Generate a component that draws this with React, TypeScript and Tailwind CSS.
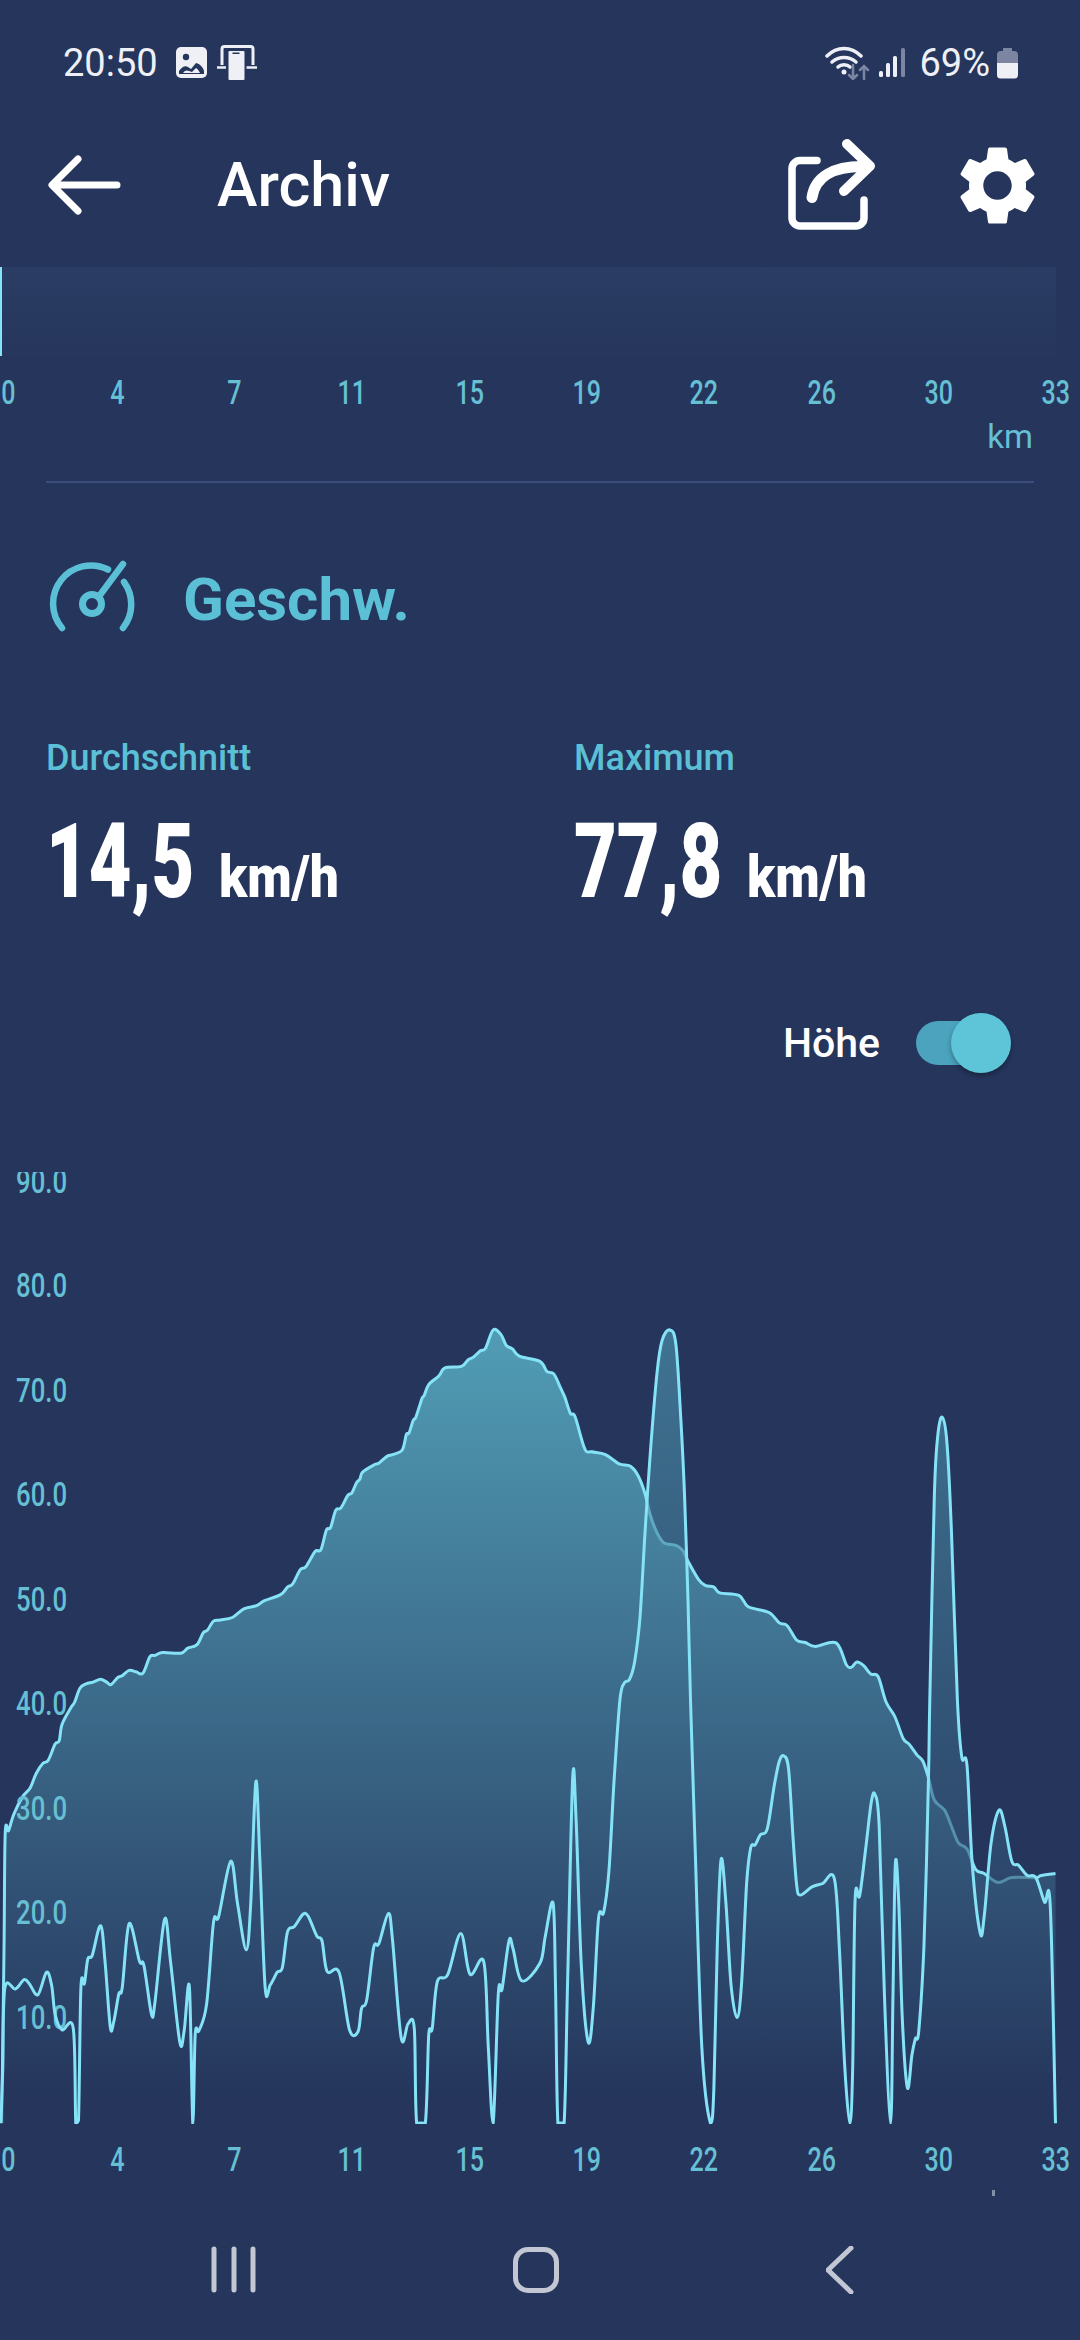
import React from "react";

type Pt = [number, number];

const BASE_Y = 2123;

// traces were read off zoomed crops, so each run has its own origin and y scale
const run = (ox: number, oy: number, sy: number, pts: number[][]): Pt[] =>
  pts.map(([x, y]) => [ox + x / 2.904, oy + y / sy]);

const elevation: Pt[] = [
  [1.7, BASE_Y],
  [4, 1950],
  ...run(0, 1700, 2.45, [
    [15, 328], [25, 320], [40, 280], [65, 238], [88, 215], [105, 180], [125, 155], [140, 148],
    [160, 108], [172, 100], [180, 60], [205, 20], [217, 5],
  ]),
  ...run(0, 1140, 2.8, [
    [232, 1535], [250, 1523], [270, 1518], [292, 1510], [310, 1518], [322, 1525], [342, 1505], [355, 1500],
    [375, 1485], [395, 1489], [415, 1493], [435, 1447], [450, 1443], [472, 1435], [525, 1437], [545, 1423],
    [572, 1413], [590, 1380], [603, 1372], [620, 1347], [640, 1344], [675, 1337], [708, 1313], [745, 1304],
    [768, 1290], [815, 1273], [835, 1252], [850, 1243], [872, 1203], [888, 1195], [915, 1152], [932, 1147],
    [948, 1092], [960, 1085], [975, 1037], [990, 1030], [1010, 995], [1022, 988], [1035, 960], [1045, 950],
    [1053, 930], [1090, 908], [1100, 905], [1125, 885], [1140, 881], [1168, 868], [1180, 825], [1188, 820],
    [1200, 785], [1208, 775], [1225, 725], [1232, 715], [1245, 685], [1275, 660], [1292, 638], [1340, 634],
    [1360, 615], [1375, 608], [1395, 590], [1410, 583], [1432, 532], [1455, 545], [1470, 575], [1488, 585],
    [1508, 605], [1568, 620],
  ]),
  ...run(540, 1140, 2.8, [
    [20, 648], [40, 655], [60, 695], [72, 720], [88, 765], [102, 775], [130, 865], [150, 873], [190, 881],
    [230, 907], [262, 913], [285, 940], [305, 990], [320, 1050], [340, 1100], [360, 1128], [395, 1135],
    [415, 1150], [430, 1180], [460, 1230], [480, 1247], [505, 1252], [522, 1268], [578, 1275], [605, 1307],
    [665, 1323], [695, 1352], [718, 1360], [745, 1400], [770, 1407], [800, 1418], [860, 1408], [890, 1470],
    [905, 1476], [920, 1462], [940, 1472], [960, 1495], [982, 1503],
  ]),
  ...run(540, 1700, 2.45, [
    [1005, 5], [1030, 40], [1055, 95], [1072, 108], [1095, 135], [1112, 150], [1128, 190], [1145, 245],
    [1175, 270], [1195, 310], [1215, 350], [1240, 365], [1265, 415], [1290, 425], [1330, 447], [1370, 435],
    [1440, 435], [1455, 430], [1497, 425],
  ]),
];

const speed: Pt[] = [
  ...run(0, 1700, 2.45, [
    [3, 1037], [8, 900], [14, 706], [45, 708], [70, 685], [85, 695], [110, 722], [135, 667], [150, 700],
    [160, 770], [180, 808], [213, 805], [220, 1037], [228, 1030], [235, 705], [245, 695], [255, 635],
    [268, 625], [292, 553], [305, 640], [320, 800], [330, 790], [345, 720], [355, 705], [375, 548],
    [405, 640], [418, 650], [440, 770], [450, 740], [478, 537], [495, 640], [522, 838], [535, 810],
    [550, 703], [560, 1037], [567, 820], [578, 810], [600, 745], [620, 545], [635, 530], [670, 395],
    [690, 500], [715, 612], [728, 500], [743, 200], [755, 400], [770, 705], [785, 698], [805, 667],
    [820, 655], [835, 568], [855, 555], [880, 525], [895, 530], [920, 578], [935, 590], [950, 665],
    [985, 668], [1015, 808], [1040, 812], [1050, 755], [1065, 735], [1085, 607], [1100, 597], [1128, 523],
    [1140, 590], [1165, 828], [1185, 793], [1203, 805], [1210, 1037], [1235, 1037], [1245, 822], [1255, 805],
    [1270, 690], [1300, 673], [1338, 572], [1365, 672], [1405, 642], [1418, 850], [1432, 1037], [1447, 720],
    [1458, 708], [1478, 590], [1490, 610], [1515, 688], [1568, 645],
  ]),
  ...run(540, 1700, 2.45, [
    [15, 580], [38, 498], [45, 700], [52, 1037], [70, 1037], [80, 700], [95, 190], [105, 300], [120, 650],
    [140, 838], [155, 750], [170, 535], [185, 520], [200, 420], [215, 200],
  ]),
  ...run(540, 1140, 2.8, [
    [232, 1568], [245, 1520], [260, 1510], [275, 1460], [290, 1340], [305, 1100], [320, 880], [340, 650],
    [355, 560], [377, 532], [395, 575], [410, 800], [420, 1000], [430, 1300], [437, 1568],
  ]),
  ...run(540, 1700, 2.45, [
    [450, 350], [470, 850], [495, 1037], [505, 950], [515, 600], [526, 390], [540, 500], [555, 700],
    [572, 778], [585, 700], [600, 450], [612, 362], [625, 355], [640, 330], [660, 315], [680, 210],
    [695, 150], [708, 137], [722, 170], [735, 340], [745, 450], [755, 478], [790, 458], [820, 450],
    [855, 438], [870, 620], [885, 900], [900, 1037], [908, 900], [915, 490], [928, 480], [945, 370],
    [962, 250], [973, 232], [985, 310], [1000, 720], [1018, 1037], [1025, 720], [1032, 400], [1042, 500],
    [1052, 780], [1067, 950], [1080, 870], [1090, 830], [1100, 810], [1115, 600], [1128, 200],
  ]),
  ...run(540, 1140, 2.8, [
    [1132, 1568], [1145, 1000], [1155, 830], [1168, 776], [1182, 850], [1195, 1100], [1212, 1568],
  ]),
  ...run(540, 1700, 2.45, [
    [1225, 140], [1240, 160], [1255, 400], [1278, 570], [1290, 530], [1310, 350], [1333, 270], [1350, 310],
    [1370, 395], [1390, 405], [1415, 430], [1440, 435], [1465, 495], [1482, 507], [1497, 1037],
  ]),
];

const smooth = (pts: Pt[]) => {
  let d = `M${pts[0][0].toFixed(1)} ${pts[0][1].toFixed(1)}`;
  for (let i = 0; i < pts.length - 1; i++) {
    const p0 = pts[Math.max(i - 1, 0)];
    const p1 = pts[i];
    const p2 = pts[i + 1];
    const p3 = pts[Math.min(i + 2, pts.length - 1)];
    const c1x = p1[0] + (p2[0] - p0[0]) / 6;
    const c1y = Math.min(p1[1] + (p2[1] - p0[1]) / 6, BASE_Y);
    const c2x = p2[0] - (p3[0] - p1[0]) / 6;
    const c2y = Math.min(p2[1] - (p3[1] - p1[1]) / 6, BASE_Y);
    d += `C${c1x.toFixed(1)} ${c1y.toFixed(1)} ${c2x.toFixed(1)} ${c2y.toFixed(1)} ${p2[0].toFixed(1)} ${p2[1].toFixed(1)}`;
  }
  return d;
};

const elevationLine = smooth(elevation);
const speedLine = smooth(speed);
const elevationArea = `${elevationLine}L1055.5 ${BASE_Y}Z`;
const speedArea = `${speedLine}Z`;

const KM = ["0", "4", "7", "11", "15", "19", "22", "26", "30", "33"];
const Y_TICKS = ["90.0", "80.0", "70.0", "60.0", "50.0", "40.0", "30.0", "20.0", "10.0"];

const KmAxis = () => (
  <div className="flex w-[1056px] justify-between">
    {KM.map((km, i) => (
      <div key={km} className={`flex w-0 justify-center ${i === 0 ? "translate-x-[8px]" : ""}`}>
        <span className="inline-block scale-x-[0.76] text-[33px] leading-none font-medium text-[#66bfd3]">{km}</span>
      </div>
    ))}
  </div>
);

const Stat: React.FC<{ label: string; value: string }> = ({ label, value }) => (
  <div className="w-[528px] shrink-0">
    <div className="text-[36px] leading-none font-medium text-[#5bc0d6]">{label}</div>
    <div className="mt-[34px] flex items-baseline text-white">
      <span className="inline-block w-[173px] origin-left scale-x-[0.71] text-[104px] leading-none font-black whitespace-nowrap">
        {value}
      </span>
      <span className="inline-block origin-left scale-x-[0.86] text-[60px] leading-none font-black whitespace-nowrap">
        km/h
      </span>
    </div>
  </div>
);

const Chart = () => (
  <div className="relative h-[952px] w-[1080px] overflow-hidden">
    <svg className="absolute inset-0 h-full w-full" viewBox="0 1172 1080 952" fill="none">
      <defs>
        <linearGradient id="area" gradientUnits="userSpaceOnUse" x1="0" y1="1330" x2="0" y2="2100">
          <stop offset="0" stopColor="#519db5" />
          <stop offset="1" stopColor="#25355c" />
        </linearGradient>
      </defs>
      <path d={elevationArea} fill="url(#area)" />
      <path d={elevationLine} stroke="#86e3f7" strokeWidth="3" strokeLinejoin="round" />
      <path d={speedArea} fill="url(#area)" opacity="0.6" />
    </svg>
    <div className="relative -mt-[43px] flex flex-col pl-[16px]">
      {Y_TICKS.map((t) => (
        <div key={t} className="flex h-[104.5px] items-center">
          <span className="inline-block origin-left scale-x-[0.78] text-[33px] leading-none font-medium text-[#66bfd3]">{t}</span>
        </div>
      ))}
    </div>
    <svg className="absolute inset-0 h-full w-full" viewBox="0 1172 1080 952" fill="none">
      <path d={speedLine} stroke="#86e3f7" strokeWidth="3" strokeLinejoin="round" />
    </svg>
  </div>
);

const StatusBar = () => (
  <div className="flex h-[124px] items-start justify-between pt-[45px] pr-[62px] pl-[63px] text-[38px] leading-[36px] text-[#eef0f6]">
    <div className="flex items-center">
      <span>20:50</span>
      <svg className="ml-[18px]" width="31" height="32" viewBox="176 47 31 32">
        <rect x="176" y="47" width="31" height="31" rx="5" fill="#eef0f6" />
        <circle cx="186" cy="57" r="3.2" fill="#25355c" />
        <path d="M179 74v-3c3-4 6-6 9-4l3 2 5-6c4 1 7 4 8 8v3z" fill="#25355c" />
        <path d="M183 73c2-3 4-3 6-2l3 1 4-4c2 1 3 3 4 5z" fill="#eef0f6" />
      </svg>
      <svg className="ml-[10px]" width="40" height="36" viewBox="219 46 40 36" fill="none">
        <path d="M224 66V50a2.500 2.500 0 0 1 2.500-2.500h26a2.500 2.500 0 0 1 2.500 2.500v16" stroke="#eef0f6" strokeWidth="3" />
        <path d="M219 68.500h9M247 68.500h12" stroke="#eef0f6" strokeWidth="2.500" />
        <rect x="229.500" y="51" width="18" height="31" rx="2" fill="#eef0f6" stroke="#25355c" strokeWidth="2" />
        <rect x="234.500" y="53.500" width="7" height="1.500" fill="#25355c" />
      </svg>
    </div>
    <div className="flex items-center">
      <svg width="46" height="34" viewBox="823 46 46 34" fill="none" strokeLinecap="round">
        <path d="M825 56c10-10 24-10 34 0" stroke="#eef0f6" strokeWidth="3.500" />
        <path d="M830 62c7-6 17-6 24 0" stroke="#eef0f6" strokeWidth="3.500" />
        <path d="M836 67c3-3 9-3 12 0" stroke="#eef0f6" strokeWidth="3.500" />
        <circle cx="842" cy="72" r="2.500" fill="#eef0f6" />
        <path d="M851 65v14m-4-4 4 4 4-4" stroke="#7c86a3" strokeWidth="2.500" />
        <path d="M862 79V66m-4 4 4-4 4 4" stroke="#7c86a3" strokeWidth="2.500" />
      </svg>
      <svg className="ml-[8px]" width="26" height="30" viewBox="877 48 26 30">
        <rect x="877" y="71" width="4" height="6" rx="1.500" fill="#eef0f6" />
        <rect x="884" y="63" width="4" height="14" rx="1.500" fill="#eef0f6" />
        <rect x="891" y="56" width="4" height="21" rx="1.500" fill="#eef0f6" />
        <rect x="899" y="48" width="4" height="29" rx="1.500" fill="#7c86a3" />
      </svg>
      <span className="ml-[14px]">69%</span>
      <svg className="ml-[7px]" width="21" height="31" viewBox="997 47 21 31">
        <path d="M1003 47h9v3h2a4 4 0 0 1 4 4v8h-21v-8a4 4 0 0 1 4-4h2z" fill="#7c86a3" />
        <path d="M997 62h21v12a3.500 3.500 0 0 1-3.500 3.500h-14a3.500 3.500 0 0 1-3.500-3.500z" fill="#eef0f6" />
      </svg>
    </div>
  </div>
);

const Header = () => (
  <header className="mb-[21px] flex h-[122px] items-center text-white">
    <svg className="ml-[46px]" width="76" height="60" viewBox="46 154 76 60" fill="none" stroke="#fff" strokeWidth="7" strokeLinecap="round" strokeLinejoin="round">
      <path d="M117 184H54M78 158 52 184l26 26" />
    </svg>
    <h1 className="ml-[95px] text-[61px] leading-none font-medium">Archiv</h1>
    <svg className="ml-auto" width="90" height="94" viewBox="786 135 90 94" fill="none" stroke="#fff" strokeLinecap="round" strokeLinejoin="round">
      <path d="M817 157.500h-17a8 8 0 0 0-8 8v49.500a8 8 0 0 0 8 8h56a8 8 0 0 0 8-8v-18" strokeWidth="7.500" />
      <path d="M847 141l23 22-26 25" strokeWidth="10" />
      <path d="M862 163.500c-28 0-47 10-50 31" strokeWidth="11" />
    </svg>
    <svg className="mr-[35px] ml-[74px]" width="95" height="95" viewBox="0 0 24 24" fill="#fff">
      <path d="M19.14 12.94c.04-.3.06-.61.06-.94 0-.32-.02-.64-.07-.94l2.03-1.58a.49.49 0 0 0 .12-.61l-1.92-3.32a.488.488 0 0 0-.59-.22l-2.39.96c-.5-.38-1.03-.7-1.62-.94l-.36-2.54a.484.484 0 0 0-.48-.41h-3.84c-.24 0-.43.17-.47.41l-.36 2.54c-.59.24-1.13.57-1.62.94l-2.39-.96c-.22-.08-.47 0-.59.22L2.74 8.87c-.12.21-.08.47.12.61l2.03 1.58c-.05.3-.09.63-.09.94s.02.64.07.94l-2.03 1.58a.49.49 0 0 0-.12.61l1.92 3.32c.12.22.37.29.59.22l2.39-.96c.5.38 1.03.7 1.62.94l.36 2.54c.05.24.24.41.48.41h3.84c.24 0 .44-.17.47-.41l.36-2.54c.59-.24 1.13-.56 1.62-.94l2.39.96c.22.08.47 0 .59-.22l1.92-3.32c.12-.22.07-.47-.12-.61l-2.01-1.58zM12 15.6c-1.98 0-3.6-1.62-3.6-3.6s1.62-3.6 3.6-3.6 3.6 1.62 3.6 3.6-1.62 3.6-3.6 3.6z" />
    </svg>
  </header>
);

const NavBar = () => (
  <div className="mt-[70px] flex h-[48px] items-center pl-[211px]">
    <svg width="46" height="48" viewBox="211 2245 46 48" stroke="#c3c7d4" strokeWidth="5" strokeLinecap="round">
      <path d="M214 2248v41M234 2248v41M253 2248v41" />
    </svg>
    <div className="ml-[256px] h-[46px] w-[46px] rounded-[15px] border-[5px] border-[#c3c7d4]" />
    <svg className="ml-[267px]" width="28" height="48" viewBox="825 2245 28 48" fill="none" stroke="#c3c7d4" strokeWidth="5" strokeLinecap="round" strokeLinejoin="round">
      <path d="M850 2247l-23 22 23 22" />
    </svg>
  </div>
);

export default function App() {
  return (
    <div className="relative h-[2340px] w-[1080px] overflow-hidden bg-[#25355c] font-[Roboto,sans-serif]">
      <StatusBar />
      <Header />

      <div className="h-[89px] w-[1056px] border-l-[2px] border-[#86e3f7] bg-gradient-to-b from-[#2b3d64] to-[#26365d]" />
      <div className="mt-[20px]">
        <KmAxis />
      </div>
      <div className="mt-[11px] pr-[47px] text-right text-[33px] leading-none text-[#66bfd3]">km</div>
      <div className="mx-[46px] mt-[28px] h-[2px] bg-[#3b4d7c]" />

      <div className="mt-[76px] flex h-[74px] items-center pl-[46px]">
        <svg width="92" height="80" viewBox="46 555 92 80" fill="none" stroke="#5bc0d6" strokeWidth="6.500" strokeLinecap="round">
          <path d="M62 627A38 38 0 0 1 108 568.500" />
          <path d="M124 581A38 38 0 0 1 123 627" />
          <circle cx="92" cy="603" r="9.500" strokeWidth="7" />
          <path d="M100 594 123 563" />
        </svg>
        <span className="mt-[7px] ml-[45px] text-[60px] leading-none font-bold text-[#5bc0d6]">Geschw.</span>
      </div>

      <div className="mt-[107px] flex pl-[46px]">
        <Stat label="Durchschnitt" value="14,5" />
        <Stat label="Maximum" value="77,8" />
      </div>

      <div className="mt-[99px] flex h-[60px] items-center justify-end pr-[69px]">
        <span className="text-[41px] leading-none font-medium text-white">Höhe</span>
        <div className="relative ml-[36px] flex h-[60px] w-[95px] items-center">
          <div className="h-[44px] w-[84px] rounded-full bg-[#4ba3bd]" />
          <div className="absolute top-0 right-0 h-[60px] w-[60px] rounded-full bg-[#5ec5d8] shadow-[0_3px_5px_rgba(0,0,0,0.3)]" />
        </div>
      </div>

      <div className="mt-[99px]">
        <Chart />
      </div>
      <div className="mt-[19px]">
        <KmAxis />
      </div>
      <div className="absolute top-[2190px] left-[992px] h-[6px] w-[3px] bg-[#7f90a8]" />

      <NavBar />
    </div>
  );
}
